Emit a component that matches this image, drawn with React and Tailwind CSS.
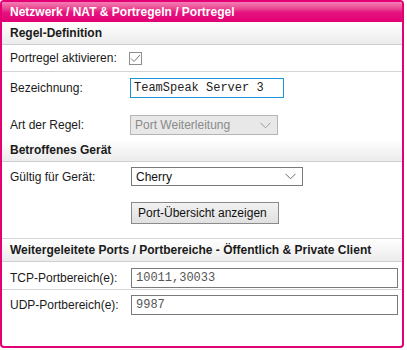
import React from 'react';

const FONT = { fontFamily: '"Liberation Sans", Arial, sans-serif' };
const MONO = 'font-["Liberation_Mono",monospace]';

function Chevron({ color = '#6b6b6b' }) {
  return (
    <svg width="11" height="7" viewBox="0 0 11 7" fill="none" className="shrink-0">
      <path d="M0.5 0.8L5.5 5.8L10.5 0.8" stroke={color} strokeWidth="1" />
    </svg>
  );
}

function SectionHead({ children, top = false }) {
  return (
    <div
      className={`shrink-0 flex items-center pl-2 text-[12px] font-bold text-[#1a1a1a] bg-gradient-to-b from-white to-[#ececec] border-b border-[#cfcfcf] ${
        top ? 'h-[24px] border-t border-t-[#d6d6d6]' : 'h-[23px]'
      }`}
    >
      {children}
    </div>
  );
}

function Label({ children }) {
  return <div className="w-[128px] shrink-0 pl-2 text-[12px] text-[#1a1a1a]">{children}</div>;
}

export default function App() {
  return (
    <div className="w-[407px] h-[350px] bg-white" style={FONT}>
      <div className="w-[404px] h-[348px] border-2 border-[#e20074] rounded-[4px] overflow-hidden flex flex-col">
        <div className="h-[20px] shrink-0 flex items-center pl-2 text-[12px] font-bold text-white bg-gradient-to-b from-[#f27cb6] via-[#e5137f] to-[#e20074]">
          Netzwerk / NAT &amp; Portregeln / Portregel
        </div>

        <SectionHead>Regel-Definition</SectionHead>

        <div className="h-[27px] shrink-0 flex items-center border-b border-[#d4d4d4]">
          <Label>Portregel aktivieren:</Label>
          <span className="-ml-[1px] w-[13px] h-[13px] border border-[#8f8f8f] bg-white flex items-center justify-center">
            <svg width="11" height="9" viewBox="0 0 11 9" fill="none">
              <path d="M1 4.5L4 7.5L10 1" stroke="#7a7a7a" strokeWidth="1" />
            </svg>
          </span>
        </div>

        <div className="pt-[6px] pb-[4px] shrink-0">
          <div className="flex items-center h-[20px]">
            <Label>Bezeichnung:</Label>
            <div className={`w-[154px] h-[20px] border border-[#1a96d8] flex items-center pl-[3px] text-[12px] text-[#222] ${MONO}`}>
              TeamSpeak Server 3
            </div>
          </div>
          <div className="flex items-center h-[20px] mt-[17px]">
            <Label>Art der Regel:</Label>
            <div className="w-[148px] h-[20px] border border-[#b4b4b4] bg-[#e8e8e8] flex items-center justify-between pl-[4px] pr-[6px] text-[12px] text-[#8a8a8a]">
              <span>Port Weiterleitung</span>
              <Chevron color="#9a9a9a" />
            </div>
          </div>
        </div>

        <SectionHead>Betroffenes Gerät</SectionHead>

        <div className="pt-[5px] pb-[14px] shrink-0">
          <div className="flex items-center h-[19px]">
            <Label>Gültig für Gerät:</Label>
            <div className="ml-[1px] w-[172px] h-[19px] border border-[#7a7a7a] bg-white flex items-center justify-between pl-[4px] pr-[6px] text-[12px] text-[#111]">
              <span>Cherry</span>
              <Chevron />
            </div>
          </div>
          <div className="flex mt-[16px]">
            <div className="w-[128px] shrink-0" />
            <button className="ml-[1px] w-[148px] h-[22px] border border-[#8a8a8a] bg-gradient-to-b from-[#f2f2f2] to-[#e0e0e0] flex items-center pl-[6px] text-[12px] text-[#111]">
              Port-Übersicht anzeigen
            </button>
          </div>
        </div>

        <SectionHead top>Weitergeleitete Ports / Portbereiche - Öffentlich &amp; Private Client</SectionHead>

        <div className="h-[28px] shrink-0 pt-[6px] flex items-start border-b border-[#d4d4d4]">
          <Label>
            <div className="h-[20px] flex items-center">TCP-Portbereich(e):</div>
          </Label>
          <div className={`ml-[1px] w-[267px] h-[20px] border border-[#7a7a7a] flex items-center pl-[4px] text-[12px] text-[#555] ${MONO}`}>
            10011,30033
          </div>
        </div>
        <div className="pt-[5px] flex items-start">
          <Label>
            <div className="h-[20px] flex items-center">UDP-Portbereich(e):</div>
          </Label>
          <div className={`ml-[1px] w-[267px] h-[20px] border border-[#7a7a7a] flex items-center pl-[4px] text-[12px] text-[#555] ${MONO}`}>
            9987
          </div>
        </div>
      </div>
    </div>
  );
}
